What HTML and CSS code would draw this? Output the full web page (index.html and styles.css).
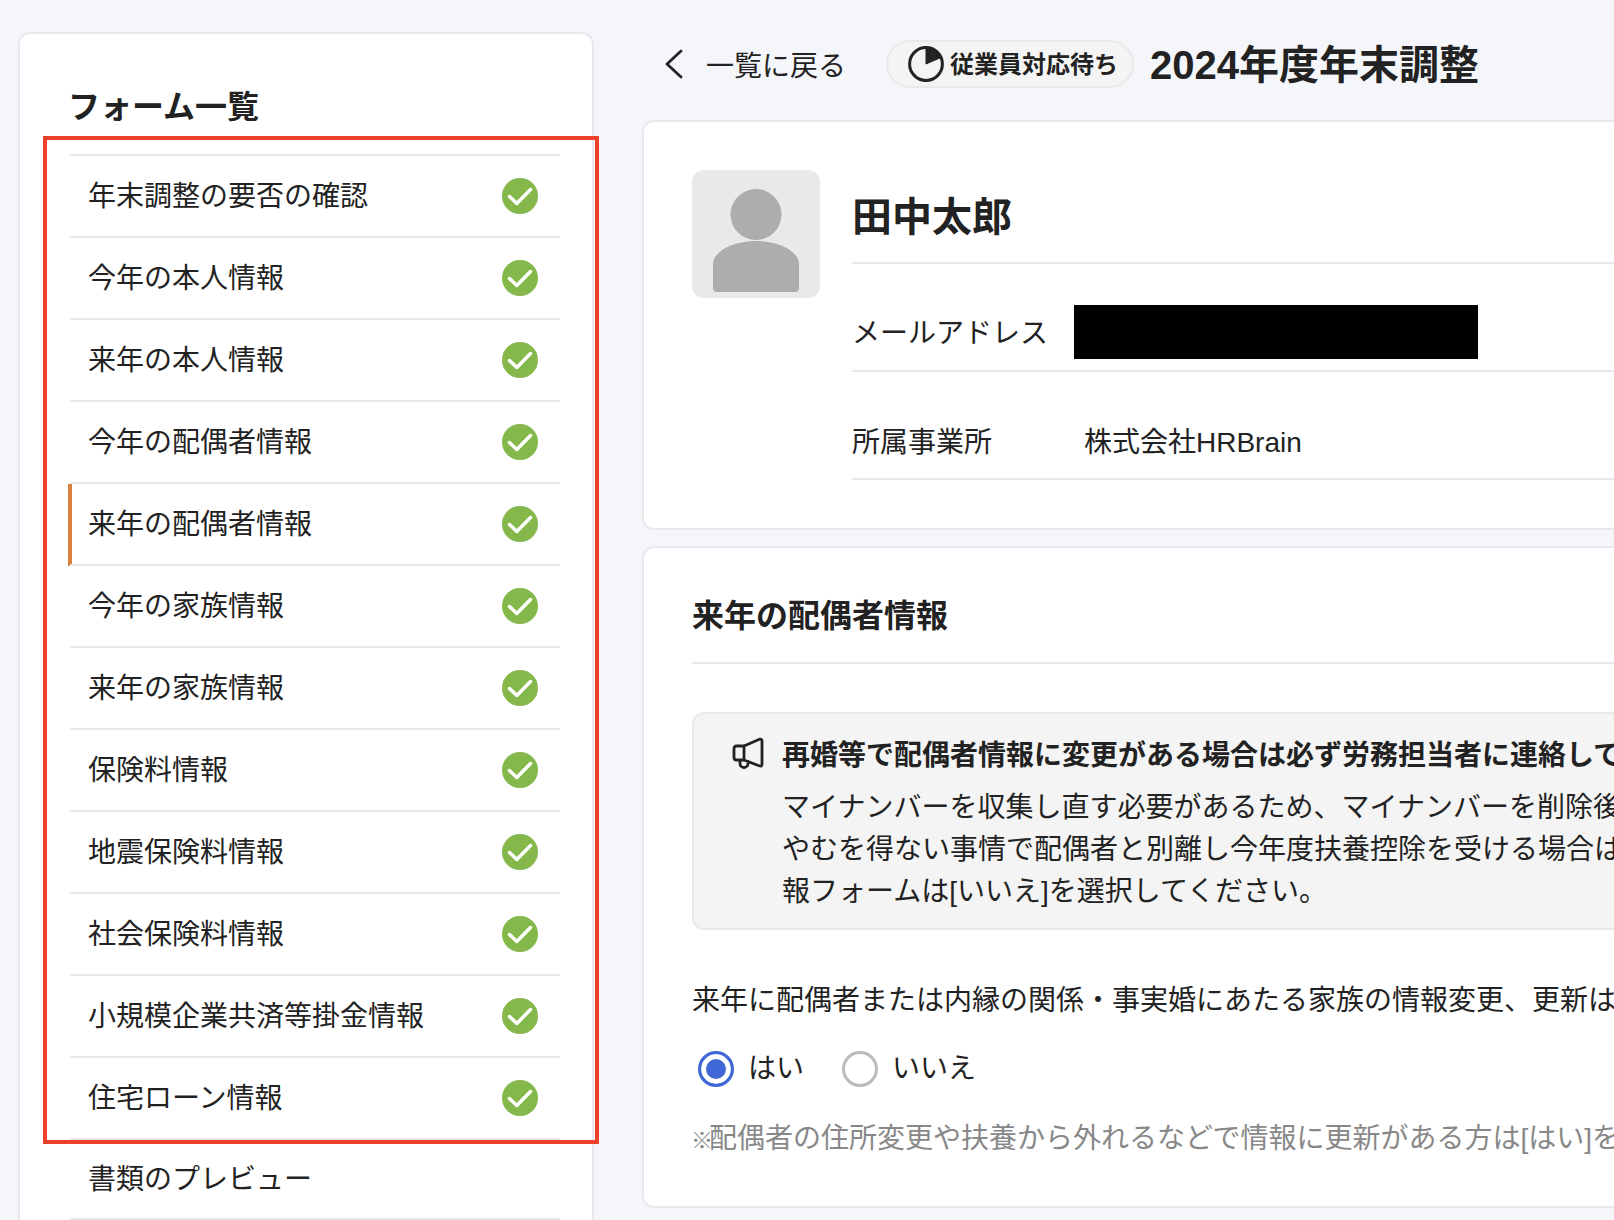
FILE: index.html
```html
<!DOCTYPE html>
<html lang="ja">
<head>
<meta charset="utf-8">
<title>2024年度年末調整</title>
<link rel="stylesheet" href="styles.css">
</head>
<body>
<div class="page">
  <aside class="sidebar">
    <h2 class="sidebar-title">フォーム一覧</h2>
    <ul class="form-list">
      <li class="form-item"><span>年末調整の要否の確認</span><svg class="check" viewBox="0 0 36 36"><circle cx="18" cy="18" r="18" fill="#85b84b"/><path d="M7.5 18.5 L14.8 25.5 L28.5 11.5" fill="none" stroke="#fff" stroke-width="3.5" stroke-linecap="round" stroke-linejoin="round"/></svg></li>
      <li class="form-item"><span>今年の本人情報</span><svg class="check" viewBox="0 0 36 36"><circle cx="18" cy="18" r="18" fill="#85b84b"/><path d="M7.5 18.5 L14.8 25.5 L28.5 11.5" fill="none" stroke="#fff" stroke-width="3.5" stroke-linecap="round" stroke-linejoin="round"/></svg></li>
      <li class="form-item"><span>来年の本人情報</span><svg class="check" viewBox="0 0 36 36"><circle cx="18" cy="18" r="18" fill="#85b84b"/><path d="M7.5 18.5 L14.8 25.5 L28.5 11.5" fill="none" stroke="#fff" stroke-width="3.5" stroke-linecap="round" stroke-linejoin="round"/></svg></li>
      <li class="form-item"><span>今年の配偶者情報</span><svg class="check" viewBox="0 0 36 36"><circle cx="18" cy="18" r="18" fill="#85b84b"/><path d="M7.5 18.5 L14.8 25.5 L28.5 11.5" fill="none" stroke="#fff" stroke-width="3.5" stroke-linecap="round" stroke-linejoin="round"/></svg></li>
      <li class="form-item is-active"><span>来年の配偶者情報</span><svg class="check" viewBox="0 0 36 36"><circle cx="18" cy="18" r="18" fill="#85b84b"/><path d="M7.5 18.5 L14.8 25.5 L28.5 11.5" fill="none" stroke="#fff" stroke-width="3.5" stroke-linecap="round" stroke-linejoin="round"/></svg></li>
      <li class="form-item"><span>今年の家族情報</span><svg class="check" viewBox="0 0 36 36"><circle cx="18" cy="18" r="18" fill="#85b84b"/><path d="M7.5 18.5 L14.8 25.5 L28.5 11.5" fill="none" stroke="#fff" stroke-width="3.5" stroke-linecap="round" stroke-linejoin="round"/></svg></li>
      <li class="form-item"><span>来年の家族情報</span><svg class="check" viewBox="0 0 36 36"><circle cx="18" cy="18" r="18" fill="#85b84b"/><path d="M7.5 18.5 L14.8 25.5 L28.5 11.5" fill="none" stroke="#fff" stroke-width="3.5" stroke-linecap="round" stroke-linejoin="round"/></svg></li>
      <li class="form-item"><span>保険料情報</span><svg class="check" viewBox="0 0 36 36"><circle cx="18" cy="18" r="18" fill="#85b84b"/><path d="M7.5 18.5 L14.8 25.5 L28.5 11.5" fill="none" stroke="#fff" stroke-width="3.5" stroke-linecap="round" stroke-linejoin="round"/></svg></li>
      <li class="form-item"><span>地震保険料情報</span><svg class="check" viewBox="0 0 36 36"><circle cx="18" cy="18" r="18" fill="#85b84b"/><path d="M7.5 18.5 L14.8 25.5 L28.5 11.5" fill="none" stroke="#fff" stroke-width="3.5" stroke-linecap="round" stroke-linejoin="round"/></svg></li>
      <li class="form-item"><span>社会保険料情報</span><svg class="check" viewBox="0 0 36 36"><circle cx="18" cy="18" r="18" fill="#85b84b"/><path d="M7.5 18.5 L14.8 25.5 L28.5 11.5" fill="none" stroke="#fff" stroke-width="3.5" stroke-linecap="round" stroke-linejoin="round"/></svg></li>
      <li class="form-item"><span>小規模企業共済等掛金情報</span><svg class="check" viewBox="0 0 36 36"><circle cx="18" cy="18" r="18" fill="#85b84b"/><path d="M7.5 18.5 L14.8 25.5 L28.5 11.5" fill="none" stroke="#fff" stroke-width="3.5" stroke-linecap="round" stroke-linejoin="round"/></svg></li>
      <li class="form-item"><span>住宅ローン情報</span><svg class="check" viewBox="0 0 36 36"><circle cx="18" cy="18" r="18" fill="#85b84b"/><path d="M7.5 18.5 L14.8 25.5 L28.5 11.5" fill="none" stroke="#fff" stroke-width="3.5" stroke-linecap="round" stroke-linejoin="round"/></svg></li>
      <li class="form-item form-item-plain"><span>書類のプレビュー</span></li>
    </ul>
  </aside>

  <main class="main">
    <header class="topbar">
      <a class="back">
        <svg class="chevron" viewBox="0 0 18 30"><path d="M16 2 L2 15 L16 28" fill="none" stroke="#222" stroke-width="2.8" stroke-linecap="round" stroke-linejoin="round"/></svg>
        <span class="back-label">一覧に戻る</span>
      </a>
      <div class="status-pill">
        <svg class="pie" viewBox="0 0 36 36"><circle cx="18" cy="18" r="16.4" fill="none" stroke="#222" stroke-width="3"/><path d="M18 18 V1.6 A16.4 16.4 0 0 1 33 11.5 Z" fill="#222" stroke="#222" stroke-width="1"/></svg>
        <span class="status-label">従業員対応待ち</span>
      </div>
      <h1 class="page-title">2024年度年末調整</h1>
    </header>

    <section class="card profile">
      <div class="avatar">
        <svg viewBox="0 0 128 128" width="128" height="128"><ellipse cx="64" cy="44.5" rx="25.5" ry="25.5" fill="#adadad"/><path d="M25 122 Q21 122 21 118 V94 C21 82 40 71 64 71 C88 71 107 82 107 94 V118 Q107 122 103 122 Z" fill="#adadad"/></svg>
      </div>
      <div class="profile-info">
        <div class="profile-name">田中太郎</div>
        <div class="profile-row profile-row-mail">
          <div class="profile-label">メールアドレス</div>
          <div class="redacted"></div>
        </div>
        <div class="profile-row profile-row-office">
          <div class="profile-label">所属事業所</div>
          <div class="profile-value">株式会社HRBrain</div>
        </div>
      </div>
    </section>

    <section class="card form-card">
      <h2 class="form-title">来年の配偶者情報</h2>
      <div class="notice">
        <svg class="megaphone" viewBox="0 0 32 32"><path d="M12 9 L27.5 2.2 Q30 1.5 30 4 V27 Q30 30 27 28.8 L12 23 Z M12 9 H4.5 Q2 9 2 11.5 V20.5 Q2 23 4.5 23 H12 M8 23 V26.5 A4 4 0 0 0 16 26.5 V24.5" fill="none" stroke="#222" stroke-width="2.8" stroke-linejoin="round" stroke-linecap="round"/></svg>
        <div class="notice-body">
          <div class="notice-head">再婚等で配偶者情報に変更がある場合は必ず労務担当者に連絡して</div>
          <div class="notice-line">マイナンバーを収集し直す必要があるため、マイナンバーを削除後</div>
          <div class="notice-line">やむを得ない事情で配偶者と別離し今年度扶養控除を受ける場合は</div>
          <div class="notice-line">報フォームは[いいえ]を選択してください。</div>
        </div>
      </div>
      <p class="question">来年に配偶者または内縁の関係・事実婚にあたる家族の情報変更、更新は</p>
      <div class="radios">
        <label class="radio"><span class="radio-mark is-on"></span><span>はい</span></label>
        <label class="radio"><span class="radio-mark"></span><span>いいえ</span></label>
      </div>
      <p class="hint"><span class="hint-mark">※</span>配偶者の住所変更や扶養から外れるなどで情報に更新がある方は[はい]を</p>
    </section>
  </main>
</div>
<div class="annotation"></div>
</body>
</html>
```
FILE: styles.css
```css
* { box-sizing: border-box; }
html, body { margin: 0; padding: 0; height: 100%; }
body {
  background: #f4f6fa;
  color: #222;
  font-family: "Liberation Sans", "Noto Sans CJK JP", sans-serif;
  font-size: 28px;
  line-height: 42px;
  overflow: hidden;
}
h1, h2, p, ul { margin: 0; padding: 0; }

.page {
  display: flex;
  align-items: flex-start;
  width: 1614px;
  height: 1220px;
  overflow: hidden;
  padding: 32px 0 0 18px;
}

/* sidebar */
.sidebar {
  flex: 0 0 576px;
  background: #fff;
  border: 2px solid #e8e8ee;
  border-radius: 12px;
  padding: 49px 32px 40px 50px;
}
.sidebar-title {
  font-size: 32px;
  line-height: 48px;
  font-weight: 700;
  margin-left: -2px;
  margin-bottom: 23px;
}
.form-list { list-style: none; }
.form-item {
  position: relative;
  display: flex;
  align-items: center;
  justify-content: space-between;
  height: 82px;
  padding: 0 22px 0 18px;
  border-top: 2px solid #e8e8ee;
}
.form-item > span { margin-top: 2px; }
.form-item-plain { height: 82px; border-bottom: 2px solid #e8e8ee; }
.form-item.is-active::before {
  content: "";
  position: absolute;
  left: -2px;
  top: 0;
  width: 4px;
  height: 82px;
  background: #d9813c;
}
.check { width: 36px; height: 36px; flex: none; }

/* main */
.main { flex: 0 0 1040px; margin-left: 48px; margin-top: 8px; }
.topbar { display: flex; align-items: center; height: 48px; margin-bottom: 32px; }
.back { display: flex; align-items: center; margin-left: 23px; margin-right: 40px; }
.back-label { padding-top: 6px; }
.chevron { width: 18px; height: 30px; margin-right: 23px; }
.status-pill {
  display: flex;
  align-items: center;
  height: 48px;
  width: 248px;
  padding-left: 20px;
  background: #f4f4f4;
  border: 2px solid #e9e9e9;
  border-radius: 24px;
  font-size: 24px;
  font-weight: 700;
  white-space: nowrap;
  margin-right: 16px;
}
.status-label { padding-top: 2px; }
.pie { width: 36px; height: 36px; margin-right: 6px; flex: none; }
.page-title { font-size: 40px; line-height: 48px; font-weight: 700; white-space: nowrap; padding-top: 2px; }

.card {
  background: #fff;
  border: 2px solid #e8e8ee;
  border-radius: 12px;
}
.profile {
  display: flex;
  align-items: flex-start;
  height: 410px;
  padding: 48px 0 0 48px;
  margin-bottom: 16px;
}
.avatar {
  flex: none;
  width: 128px;
  height: 128px;
  background: #e9e9e9;
  border-radius: 12px;
  margin-right: 32px;
}
.avatar svg { display: block; }
.profile-info { flex: 1; }
.profile-name {
  height: 94px;
  padding-top: 23px;
  font-size: 40px;
  line-height: 48px;
  font-weight: 700;
  border-bottom: 2px solid #e8e8ee;
}
.profile-row { display: flex; border-bottom: 2px solid #e8e8ee; }
.profile-row-mail { height: 108px; padding-top: 41px; }
.profile-row-office { height: 108px; padding-top: 50px; }
.profile-label { width: 222px; flex: none; }
.profile-row-mail .profile-label { line-height: 58px; }
.redacted { width: 404px; height: 54px; background: #000; }
.profile-value { padding-left: 10px; }

.form-card { padding: 44px 0 47px 48px; height: 662px; }
.form-title {
  font-size: 32px;
  line-height: 48px;
  font-weight: 700;
  padding-bottom: 22px;
  border-bottom: 2px solid #e8e8ee;
  margin-bottom: 48px;
}
.notice {
  display: flex;
  align-items: flex-start;
  height: 218px;
  padding: 21px 0 0 38px;
  background: #f4f4f4;
  border: 2px solid #e9e9e9;
  border-radius: 12px;
  white-space: nowrap;
}
.megaphone { flex: none; width: 32px; height: 32px; margin-top: 2px; margin-right: 18px; }
.notice-head { font-weight: 700; margin-bottom: 10px; }
.question { margin-top: 50px; white-space: nowrap; }
.radios { display: flex; margin-top: 26px; padding-left: 6px; }
.radio { display: flex; align-items: center; margin-right: 38px; }
.radio-mark {
  width: 36px;
  height: 36px;
  margin-right: 14px;
  background: #fff;
  border: 3px solid #bbb;
  border-radius: 50%;
}
.radio-mark.is-on { border-color: #3f68d6; background: #3f68d6; box-shadow: inset 0 0 0 5px #fff; }
.hint { margin-top: 27px; color: #888; white-space: nowrap; }
.hint-mark { font-family: "Noto Sans CJK JP", sans-serif; font-size: 22px; letter-spacing: -4px; margin-left: -1px; }

/* review annotation drawn over the screenshot */
.annotation {
  position: absolute;
  left: 43px;
  top: 136px;
  width: 556px;
  height: 1008px;
  border: 4px solid #ee4026;
}
```
